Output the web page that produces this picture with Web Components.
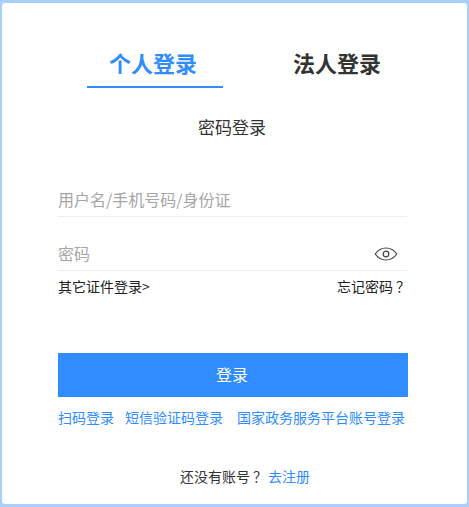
<!DOCTYPE html>
<html lang="zh">
<head>
<meta charset="utf-8">
<title>登录</title>
<style>
  html, body { margin: 0; height: 100%; }
  body {
    background: #a8d0fb;
    font-family: "Noto Sans CJK SC", "Liberation Sans", sans-serif;
    overflow: hidden;
  }
</style>
</head>
<body>
<login-card></login-card>
<script>
class LoginTabs extends HTMLElement {
  connectedCallback() {
    this.attachShadow({ mode: 'open' });
    this.shadowRoot.innerHTML = `
      <style>
        :host { display: flex; gap: 46px; margin-left: 85px; }
        .tab {
          width: 136px;
          height: 45px;
          box-sizing: border-box;
          padding-top: 1px;
          line-height: 37px;
          text-align: center;
          font-size: 22px;
          font-weight: 700;
          color: #333;
        }
        .tab.active {
          color: #308cff;
          border-bottom: 2px solid #308cff;
          padding-right: 4px;
        }
      </style>
      <div class="tab active">个人登录</div>
      <div class="tab">法人登录</div>
    `;
  }
}

class LoginField extends HTMLElement {
  connectedCallback() {
    this.attachShadow({ mode: 'open' });
    const eye = this.hasAttribute('eye') ? `
      <svg width="24" height="14" viewBox="0 0 24 14" fill="none" stroke="#444" stroke-width="1.2">
        <path d="M1.2 7C4 3 7.800 1 12 1s8 2 10.800 6C20 11 16.200 13 12 13S4 11 1.200 7z"/>
        <circle cx="12" cy="7" r="2.800"/>
      </svg>` : '';
    this.shadowRoot.innerHTML = `
      <style>
        :host {
          display: flex;
          align-items: center;
          justify-content: space-between;
          height: 38px;
          width: 349px;
          box-sizing: border-box;
          padding-top: 2px;
          border-bottom: 1px solid #eee;
          font-size: 16px;
          color: #a6a6a6;
        }
        svg { margin-right: 9px; margin-top: 3px; }
      </style>
      <span><slot></slot></span>${eye}
    `;
  }
}

class LoginCard extends HTMLElement {
  connectedCallback() {
    this.attachShadow({ mode: 'open' });
    this.shadowRoot.innerHTML = `
      <style>
        :host {
          display: block;
          box-sizing: border-box;
          width: 465px;
          height: 501px;
          margin: 3px 0 0 2px;
          padding-top: 40px;
          background: #fff;
          border-radius: 3px;
          color: #333;
        }
        .sub {
          margin-top: 26px;
          padding-right: 5px;
          text-align: center;
          font-size: 17px;
          line-height: 26px;
        }
        .form { margin: 0 0 0 56px; width: 350px; }
        login-field { margin-top: 16px; }
        login-field:first-child { margin-top: 39px; }
        .row {
          display: flex;
          justify-content: space-between;
          margin-top: 5px;
          padding-right: 1px;
          font-size: 14px;
          line-height: 20px;
          color: #222;
        }
        .q { display: inline-block; width: 14px; text-indent: 3px; }
        .btn {
          margin-top: 57px;
          height: 44px;
          line-height: 42px;
          padding-right: 2px;
          box-sizing: border-box;
          text-align: center;
          background: #308cff;
          color: #fff;
          font-size: 16px;
        }
        .links {
          display: flex;
          gap: 11px;
          margin-top: 10px;
          font-size: 14px;
          line-height: 20px;
          color: #308cff;
        }
        .links span:last-child { margin-left: 3px; }
        .reg {
          margin-top: 39px;
          padding-left: 178px;
          font-size: 14px;
          line-height: 20px;
        }
        .reg a { color: #308cff; margin-left: 4px; }
      </style>
      <login-tabs></login-tabs>
      <div class="sub">密码登录</div>
      <div class="form">
        <login-field>用户名/手机号码/身份证</login-field>
        <login-field eye>密码</login-field>
        <div class="row"><span>其它证件登录&gt;</span><span>忘记密码<span class="q">？</span></span></div>
        <div class="btn">登录</div>
        <div class="links"><span>扫码登录</span><span>短信验证码登录</span><span>国家政务服务平台账号登录</span></div>
      </div>
      <div class="reg">还没有账号<span class="q">？</span><a>去注册</a></div>
    `;
  }
}

customElements.define('login-tabs', LoginTabs);
customElements.define('login-field', LoginField);
customElements.define('login-card', LoginCard);
</script>
</body>
</html>
